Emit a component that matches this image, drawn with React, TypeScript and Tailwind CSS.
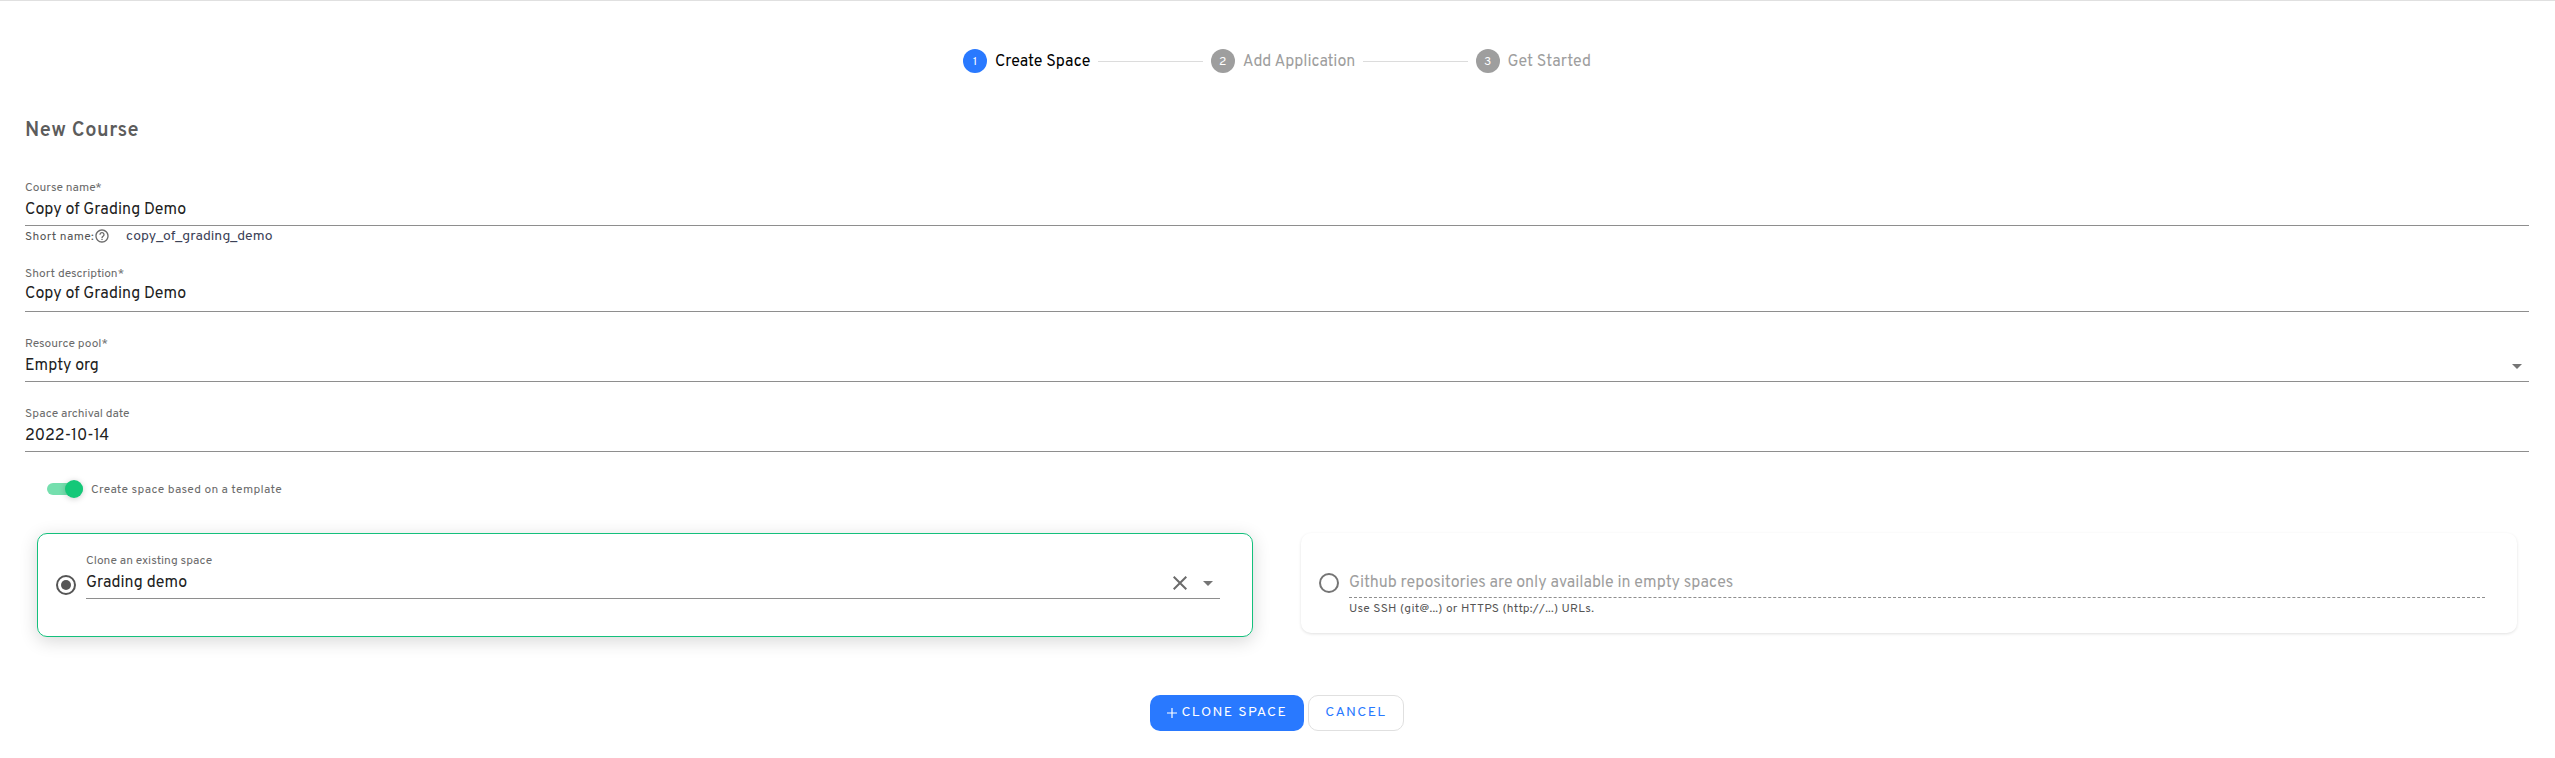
import { useState, type ReactNode } from "react";

const steps = ["Create Space", "Add Application", "Get Started"];

function Stepper({ active }: { active: number }) {
  return (
    <ol className="mx-auto flex w-[628px] max-w-full items-center gap-2">
      {steps.map((name, i) => (
        <li
          key={name}
          aria-current={i === active ? "step" : undefined}
          className={i < steps.length - 1 ? "flex grow items-center gap-2" : "flex items-center gap-2"}
        >
          <span
            className={
              i === active
                ? "flex size-6 items-center justify-center rounded-full bg-[#2979ff] pt-0.5 text-xs text-white"
                : "flex size-6 items-center justify-center rounded-full bg-[#9e9e9e] pt-0.5 text-xs text-white"
            }
          >
            {i + 1}
          </span>
          <span
            className={
              i === active
                ? "pt-0.5 text-base leading-[22px] whitespace-nowrap text-black"
                : "pt-0.5 text-base leading-[22px] whitespace-nowrap text-[#9e9e9e]"
            }
          >
            {name}
          </span>
          {i < steps.length - 1 && <span className="h-px grow bg-[#dcdcdc]" />}
        </li>
      ))}
    </ol>
  );
}

function Caret() {
  return (
    <svg viewBox="0 0 10 5" className="h-[5px] w-[10px] shrink-0 fill-[#757575]" aria-hidden="true">
      <path d="M0 0h10L5 5z" />
    </svg>
  );
}

function Field({ id, label, children }: { id: string; label: string; children: ReactNode }) {
  return (
    <div className="flex h-[46px] grow flex-col border-b border-[#8e8e8e]">
      <label htmlFor={id} className="text-xs leading-[17px] text-[#6b6b6b]">
        {label}
      </label>
      {children}
    </div>
  );
}

const control = "block h-[26px] w-full min-w-0 bg-transparent text-base leading-[26px] text-[#212121] outline-none";
const radio = "flex size-5 shrink-0 appearance-none rounded-full border-2 bg-white";

export default function App() {
  const [templated, setTemplated] = useState(true);
  const [source, setSource] = useState("clone");
  const [space, setSpace] = useState("Grading demo");

  return (
    <main className="border-t border-[#e0e0e0] bg-white pr-[26px] pb-[27px] pl-[25px] font-[Overpass,Roboto,sans-serif]">
      <div className="pt-12">
        <Stepper active={0} />
      </div>

      <form onSubmit={(e) => e.preventDefault()}>
        <h1 className="mt-11 text-xl leading-7 font-semibold tracking-wide text-[#5c5c5c]">New Course</h1>

        <div className="mt-[35px]">
          <Field id="name" label="Course name*">
            <input id="name" className={control} defaultValue="Copy of Grading Demo" />
          </Field>
          <div className="flex h-5 items-center text-xs text-[#555]">
            <span className="pt-0.5 tracking-wide">Short name:</span>
            <svg viewBox="0 0 24 24" className="size-4 fill-[#6b6b6b]" aria-hidden="true">
              <path d="M11 18h2v-2h-2v2zm1-16C6.48 2 2 6.48 2 12s4.480 10 10 10 10-4.480 10-10S17.520 2 12 2zm0 18c-4.410 0-8-3.590-8-8s3.590-8 8-8 8 3.590 8 8-3.590 8-8 8zm0-14c-2.210 0-4 1.790-4 4h2c0-1.100.9-2 2-2s2 .9 2 2c0 2-3 1.750-3 5h2c0-2.250 3-2.500 3-5 0-2.210-1.790-4-4-4z" />
            </svg>
            <span className="ml-4 pt-0.5 text-sm text-[#3c4257]">copy_of_grading_demo</span>
          </div>
        </div>

        <div className="mt-5 flex flex-col gap-6">
          <Field id="description" label="Short description*">
            <textarea
              id="description"
              rows={1}
              className="block h-[22px] w-full resize-none overflow-hidden bg-transparent text-base leading-[22px] text-[#212121] outline-none"
              defaultValue="Copy of Grading Demo"
            />
          </Field>
          <Field id="pool" label="Resource pool*">
            <div className="flex items-center pr-[7px]">
              <select id="pool" className={`${control} appearance-none`}>
                <option>Empty org</option>
              </select>
              <Caret />
            </div>
          </Field>
          <Field id="archival" label="Space archival date">
            <input id="archival" className={control} defaultValue="2022-10-14" />
          </Field>
        </div>

        <label className="mt-[27px] ml-[22px] flex w-fit items-center gap-2 text-xs leading-[18px] tracking-wide text-[#6b6b6b]">
          <span className="flex h-[18px] w-9 items-center">
            <input
              type="checkbox"
              role="switch"
              checked={templated}
              onChange={(e) => setTemplated(e.target.checked)}
              className="flex h-3 w-9 appearance-none items-center rounded-full bg-[#bdbdbd] before:size-[18px] before:shrink-0 before:rounded-full before:bg-white before:shadow-[0_1px_6px_rgba(0,0,0,0.2)] checked:justify-end checked:bg-[#75dfae] checked:before:bg-[#14c878]"
            />
          </span>
          <span className="pt-0.5">Create space based on a template</span>
        </label>

        <div className="mt-[34px] grid grid-cols-2 items-start gap-12 px-3">
          <section className="flex rounded-[10px] border border-[#14c07c] pt-[19px] pr-8 pb-[37px] pl-[18px] shadow-[0_4px_18px_rgba(0,0,0,0.16)]">
            <input
              type="radio"
              name="source"
              aria-label="Clone an existing space"
              checked={source === "clone"}
              onChange={() => setSource("clone")}
              className={`${radio} mt-[22px] mr-[10px] items-center justify-center border-[#555] checked:before:size-[10px] checked:before:rounded-full checked:before:bg-[#555]`}
            />
            <Field id="space" label="Clone an existing space">
              <div className="flex items-center pr-[7px]">
                <input
                  id="space"
                  role="combobox"
                  aria-expanded={false}
                  className={control}
                  value={space}
                  onChange={(e) => setSpace(e.target.value)}
                />
                <button type="button" aria-label="Clear" onClick={() => setSpace("")} className="mr-4">
                  <svg viewBox="0 0 14 14" className="size-[14px] stroke-[#6b6b6b]" fill="none" strokeWidth="2">
                    <path d="M0.700 0.700l12.600 12.600M13.300 0.700L0.700 13.300" />
                  </svg>
                </button>
                <button type="button" aria-label="Open">
                  <Caret />
                </button>
              </div>
            </Field>
          </section>

          <section className="flex rounded-[10px] pt-10 pr-8 pb-4 pl-[18px] shadow-[0_1px_3px_rgba(0,0,0,0.12)]">
            <input
              type="radio"
              name="source"
              aria-label="Import a Github repository"
              checked={source === "github"}
              onChange={() => setSource("github")}
              className={`${radio} mr-[10px] items-center justify-center border-[#757575] checked:before:size-[10px] checked:before:rounded-full checked:before:bg-[#555]`}
            />
            <div className="min-w-0 grow">
              <input
                disabled
                aria-label="Github repository"
                aria-describedby="repo-help"
                placeholder="Github repositories are only available in empty spaces"
                className="block h-[25px] w-full border-b border-dashed border-[#8e8e8e] pb-[5px] text-base leading-5 placeholder:text-[#9e9e9e]"
              />
              <p id="repo-help" className="mt-[3px] text-xs leading-4 tracking-wide text-[#555]">
                Use SSH (git@...) or HTTPS (http://...) URLs.
              </p>
            </div>
          </section>
        </div>

        <div className="mt-[58px] flex justify-center gap-1 text-sm">
          <button
            type="submit"
            className="flex h-9 items-center gap-1 rounded-[10px] bg-[#2979ff] px-[17px] tracking-widest whitespace-nowrap text-white"
          >
            <svg viewBox="0 0 10 10" className="size-[10px] stroke-white" strokeWidth="1.2" aria-hidden="true">
              <path d="M5 0v10M0 5h10" />
            </svg>
            CLONE SPACE
          </button>
          <button
            type="button"
            className="h-9 rounded-[10px] border border-[#e0e0e0] px-4 tracking-widest text-[#2979ff]"
          >
            CANCEL
          </button>
        </div>
      </form>
    </main>
  );
}
